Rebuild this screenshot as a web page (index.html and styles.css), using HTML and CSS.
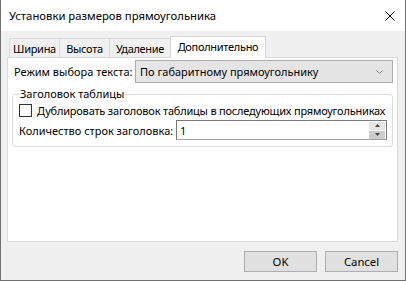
FILE: index.html
```html
<!DOCTYPE html>
<html lang="ru">
<head>
<meta charset="UTF-8">
<title>Установки размеров прямоугольника</title>
<link rel="stylesheet" href="styles.css">
</head>
<body>
  <div class="window">
    <div class="titlebar">
      <span class="title">Установки размеров прямоугольника</span>
      <svg class="close" width="10" height="10" viewBox="0 0 10 10">
        <path d="M0.5 0.5 L9.5 9.5 M9.5 0.5 L0.5 9.5" stroke="#000" stroke-width="1"/>
      </svg>
    </div>

    <div class="client">
      <div class="tabs">
        <div class="tab tab-width">Ширина</div>
        <div class="tab tab-height">Высота</div>
        <div class="tab tab-remove">Удаление</div>
        <div class="tab tab-extra active">Дополнительно</div>
      </div>

      <div class="panel">
        <div class="row">
          <label>Режим выбора текста:</label>
          <div class="combo">
            <span>По габаритному прямоугольнику</span>
            <svg class="chevron" width="7" height="4" viewBox="0 0 7 4">
              <path d="M0.5 0.5 L3.5 3.5 L6.5 0.5" fill="none" stroke="#888" stroke-width="1"/>
            </svg>
          </div>
        </div>

        <fieldset class="group">
          <legend>Заголовок таблицы</legend>
          <div class="check-row">
            <span class="checkbox"></span>
            <span class="check-label">Дублировать заголовок таблицы в последующих прямоугольниках</span>
          </div>
          <div class="row spin-row">
            <label>Количество строк заголовка:</label>
            <div class="spin">
              <span class="spin-value">1</span>
              <div class="spin-buttons">
                <div class="spin-up">
                  <svg width="5" height="3" viewBox="0 0 5 3"><path d="M2.5 0 L5 3 L0 3 Z" fill="#444"/></svg>
                </div>
                <div class="spin-down">
                  <svg width="5" height="3" viewBox="0 0 5 3"><path d="M0 0 L5 0 L2.5 3 Z" fill="#444"/></svg>
                </div>
              </div>
            </div>
          </div>
        </fieldset>
      </div>

      <div class="buttons">
        <button>OK</button>
        <button>Cancel</button>
      </div>
    </div>
  </div>
</body>
</html>
```

FILE: styles.css
```css
body {
  margin: 0;
  padding: 0;
  background-color: #fff;
  font-family: "Noto Sans", "Open Sans", sans-serif;
  font-size: 11px;
  color: #000;
}

.window {
  width: 406px;
  height: 281px;
  box-sizing: border-box;
  border: 1px solid #707070;
  border-top: none;
  display: flex;
  flex-direction: column;
}

.titlebar {
  height: 31px;
  background-color: #fff;
  display: flex;
  align-items: center;
  padding-left: 8px;
  padding-right: 10px;
  font-size: 11.3px;
}

.title {
  flex: 1;
}

.close {
  display: block;
}

.client {
  flex: 1;
  background-color: #f0f0f0;
  display: flex;
  flex-direction: column;
  padding: 5px 7px 0 6px;
}

/* Вкладки */
.tabs {
  display: flex;
  align-items: flex-end;
  padding-left: 2px;
  height: 21px;
  position: relative;
  z-index: 1;
}

.tab {
  height: 19px;
  box-sizing: border-box;
  padding-top: 1px;
  border: 1px solid #d9d9d9;
  border-bottom: none;
  margin-left: -1px;
  background-color: #f0f0f0;
  line-height: 17px;
  text-align: center;
  white-space: nowrap;
  letter-spacing: -0.3px;
}

.tab:first-child {
  margin-left: 0;
}

.tab-width { width: 51px; }
.tab-height { width: 51px; }
.tab-remove { width: 62px; }
.tab-extra { width: 96px; }

.tab.active {
  height: 22px;
  margin: 0 -2px -1px -1px;
  background-color: #fff;
  line-height: 17px;
}

.panel {
  height: 185px;
  box-sizing: border-box;
  background-color: #fff;
  border: 1px solid #d9d9d9;
  padding: 2px 4px 0 6px;
}

.row {
  display: flex;
  align-items: center;
}

.row label {
  white-space: nowrap;
  flex-shrink: 0;
}

.combo {
  margin-left: auto;
  width: 258px;
  height: 23px;
  box-sizing: border-box;
  border: 1px solid #adadad;
  background-color: #e5e5e5;
  display: flex;
  align-items: center;
  padding: 0 9px 0 4px;
}

.combo span {
  flex: 1;
  white-space: nowrap;
}

.chevron {
  display: block;
}

/* Группа */
.group {
  min-width: 0;
  margin: 3px 0 0 -2px;
  border: 1px solid #dcdcdc;
  border-radius: 3px;
  padding: 0 5px 6px 6px;
}

.group legend {
  padding: 0 1px;
  line-height: 16px;
}

.check-row {
  display: flex;
  align-items: center;
  height: 16px;
}

.check-label {
  white-space: nowrap;
  letter-spacing: -0.2px;
}

.checkbox {
  flex-shrink: 0;
  width: 13px;
  height: 13px;
  box-sizing: border-box;
  border: 1px solid #333;
  background-color: #fff;
  margin-right: 5px;
}

.spin-row {
  margin-top: 2px;
}

.spin {
  margin-left: auto;
  width: 211px;
  height: 20px;
  box-sizing: border-box;
  border: 1px solid #7a7a7a;
  border-bottom-color: #a0a0a0;
  display: flex;
  align-items: center;
  padding: 0 1px 0 3px;
}

.spin-value {
  flex: 1;
}

.spin-buttons {
  width: 16px;
  height: 17px;
  display: flex;
  flex-direction: column;
  gap: 1px;
}

.spin-up,
.spin-down {
  flex: 1;
  display: flex;
  align-items: center;
  justify-content: center;
  background-color: #e6e6e6;
}

.spin-down {
  background-color: #cdcdcd;
}

.spin-up svg,
.spin-down svg {
  display: block;
}

/* Кнопки */
.buttons {
  display: flex;
  justify-content: flex-end;
  gap: 8px;
  margin-top: 9px;
}

button {
  width: 73px;
  height: 21px;
  box-sizing: border-box;
  background-color: #e1e1e1;
  border: 1px solid #adadad;
  font-family: inherit;
  font-size: 11.3px;
  color: #000;
  padding: 0;
}
```
